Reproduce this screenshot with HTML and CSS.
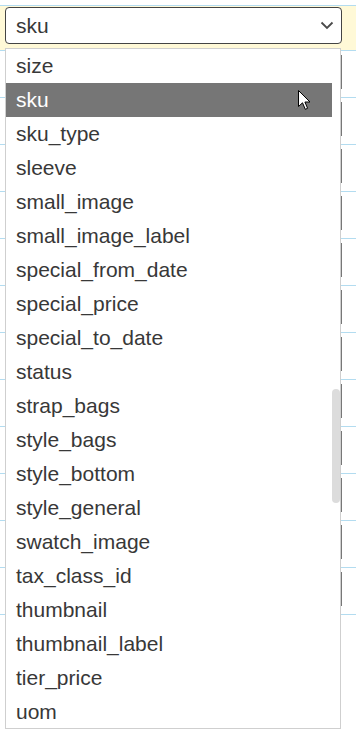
FILE: index.html
```html
<!DOCTYPE html>
<html lang="en">
<head>
    <meta charset="UTF-8">
    <meta name="viewport" content="width=device-width, initial-scale=1.0">
    <title>Attribute select</title>
    <link rel="stylesheet" href="styles.css">
</head>

<body>
    <div class="form">
        <div class="row row-active">
            <div class="select">
                <span class="value">sku</span>
                <svg class="chevron" width="14" height="9" viewBox="0 0 14 9">
                    <path d="M1.5 1.5 L7 7 L12.5 1.5" fill="none" stroke="#4a4a4a" stroke-width="1.8"/>
                </svg>
            </div>
        </div>
        <div class="row"><span class="input"></span></div>
        <div class="row"><span class="input"></span></div>
        <div class="row"><span class="input"></span></div>
        <div class="row"><span class="input"></span></div>
        <div class="row"><span class="input"></span></div>
        <div class="row"><span class="input"></span></div>
        <div class="row"><span class="input"></span></div>
        <div class="row"><span class="input"></span></div>
        <div class="row"><span class="input"></span></div>
        <div class="row"><span class="input"></span></div>
        <div class="row"><span class="input"></span></div>
        <div class="row"><span class="input"></span></div>
        <div class="row row-last"></div>
    </div>

    <div class="dropdown">
        <ul class="options">
            <li>size</li>
            <li class="selected">sku</li>
            <li>sku_type</li>
            <li>sleeve</li>
            <li>small_image</li>
            <li>small_image_label</li>
            <li>special_from_date</li>
            <li>special_price</li>
            <li>special_to_date</li>
            <li>status</li>
            <li>strap_bags</li>
            <li>style_bags</li>
            <li>style_bottom</li>
            <li>style_general</li>
            <li>swatch_image</li>
            <li>tax_class_id</li>
            <li>thumbnail</li>
            <li>thumbnail_label</li>
            <li>tier_price</li>
            <li>uom</li>
        </ul>
        <div class="scrollbar"><span class="thumb"></span></div>
    </div>

    <svg class="cursor" width="14" height="21" viewBox="0 0 14 21">
        <path d="M0.5 0.5 L0.5 16.5 L4.5 12.8 L7.3 19.3 L9.6 18.3 L6.9 12 L12 12 Z" fill="#fff" stroke="#000" stroke-width="1"/>
    </svg>
</body>

</html>
```

FILE: styles.css
```css
body {
    margin: 0;
    padding-top: 5px;
    background-color: #fff;
    font-family: "Liberation Sans", Arial, sans-serif;
    color: #383838;
}

.form {
    width: 356px;
}

.row {
    height: 46px;
    border-top: 1px solid #b3dcf0;
    display: flex;
    justify-content: flex-end;
    align-items: flex-start;
    padding-right: 14px;
}

.row-active {
    height: 45px;
    background-color: #fff9d7;
    justify-content: flex-start;
    padding: 1px 0 0 5px;
    box-sizing: border-box;
}

.row-last {
    height: 0;
}

.input {
    width: 40px;
    height: 34px;
    margin-top: 4px;
    border: 1px solid #777;
    border-left: 0;
    box-sizing: border-box;
}

.select {
    width: 337px;
    height: 37px;
    box-sizing: border-box;
    border: 1px solid #444;
    border-radius: 4px;
    background-color: #fff;
    display: flex;
    align-items: center;
    justify-content: space-between;
    padding: 0 7px 0 10px;
    font-size: 21px;
}

.value {
    margin-top: 1px;
}

.chevron {
    display: block;
}

.dropdown {
    position: absolute;
    left: 5px;
    top: 48px;
    width: 336px;
    height: 681px;
    box-sizing: border-box;
    border: 1px solid #cfcfcf;
    background-color: #fff;
    display: flex;
    overflow: hidden;
}

.options {
    margin: 0;
    padding: 0;
    list-style: none;
    flex: 1;
}

.options li {
    height: 34px;
    line-height: 34px;
    padding-left: 10px;
    font-size: 21px;
    white-space: nowrap;
}

.options li.selected {
    background-color: #767676;
    color: #fff;
}

.scrollbar {
    width: 8px;
    position: relative;
}

.thumb {
    position: absolute;
    left: 0;
    top: 340px;
    width: 8px;
    height: 114px;
    border-radius: 4px;
    background-color: #dcdcdc;
}

.cursor {
    position: absolute;
    left: 298px;
    top: 90px;
}
```
